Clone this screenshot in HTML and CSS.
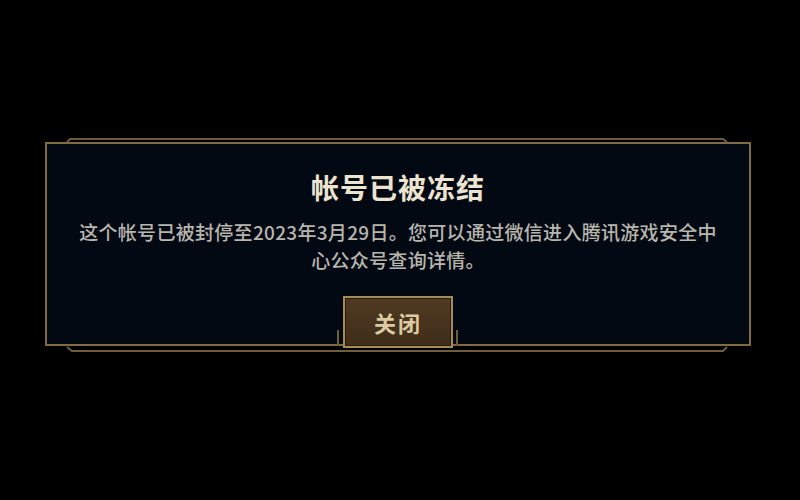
FILE: index.html
```html
<!DOCTYPE html>
<html lang="zh-CN">
<head>
    <meta charset="UTF-8">
    <meta name="viewport" content="width=device-width, initial-scale=1.0">
    <title>帐号已被冻结</title>
    <link rel="stylesheet" href="styles.css">
</head>
<body>
    <div class="screen">
        <div class="dialog">
            <svg class="frame" width="706" height="222" viewBox="0 0 706 222">
                <polyline points="22,8 25,5 678,5 682,8" />
                <polyline points="22,213 27,217 678,217 682,213" />
                <line x1="293" y1="196" x2="293" y2="212" />
                <line x1="412" y1="196" x2="412" y2="212" />
            </svg>
            <h1 class="dialog-title">帐号已被冻结</h1>
            <p class="dialog-text">这个帐号已被封停至2023年3月29日。您可以通过微信进入腾讯游戏安全中心公众号查询详情。</p>
            <button class="close-btn">关闭</button>
        </div>
    </div>
</body>
</html>
```

FILE: styles.css
```css
body {
    margin: 0;
    background-color: #000;
    font-family: "Noto Sans CJK SC", "Noto Sans", sans-serif;
}

.screen {
    height: 500px;
    box-sizing: border-box;
    padding-top: 142px;
    display: flex;
    justify-content: center;
}

.dialog {
    position: relative;
    width: 706px;
    box-sizing: border-box;
    margin-right: 4px;
    padding: 25px 28px 0;
    background-color: #030913;
    border: 2px solid #806b43;
    display: flex;
    flex-direction: column;
    align-items: center;
    height: 204px;
}

.frame {
    position: absolute;
    top: -10px;
    left: -2px;
    pointer-events: none;
}

.frame polyline,
.frame line {
    fill: none;
    stroke: #6e5c3c;
    stroke-width: 2;
}

.dialog-title {
    margin: 0;
    font-size: 28px;
    line-height: 36px;
    font-weight: bold;
    letter-spacing: 1px;
    color: #ece4d1;
}

.dialog-text {
    margin: 13px 0 0;
    font-size: 19px;
    line-height: 28px;
    font-weight: 500;
    letter-spacing: 0.3px;
    color: #b8b5ad;
    text-align: center;
}

.close-btn {
    margin-top: auto;
    margin-bottom: -4px;
    position: relative;
    width: 110px;
    height: 52px;
    border: 2px solid #a48d58;
    background: linear-gradient(#503a22, #3f2d19);
    box-shadow: inset 0 0 0 1px #2a1d0f;
    color: #dccba1;
    font-family: inherit;
    font-size: 22px;
    font-weight: bold;
    letter-spacing: 2px;
    cursor: pointer;
}
```
